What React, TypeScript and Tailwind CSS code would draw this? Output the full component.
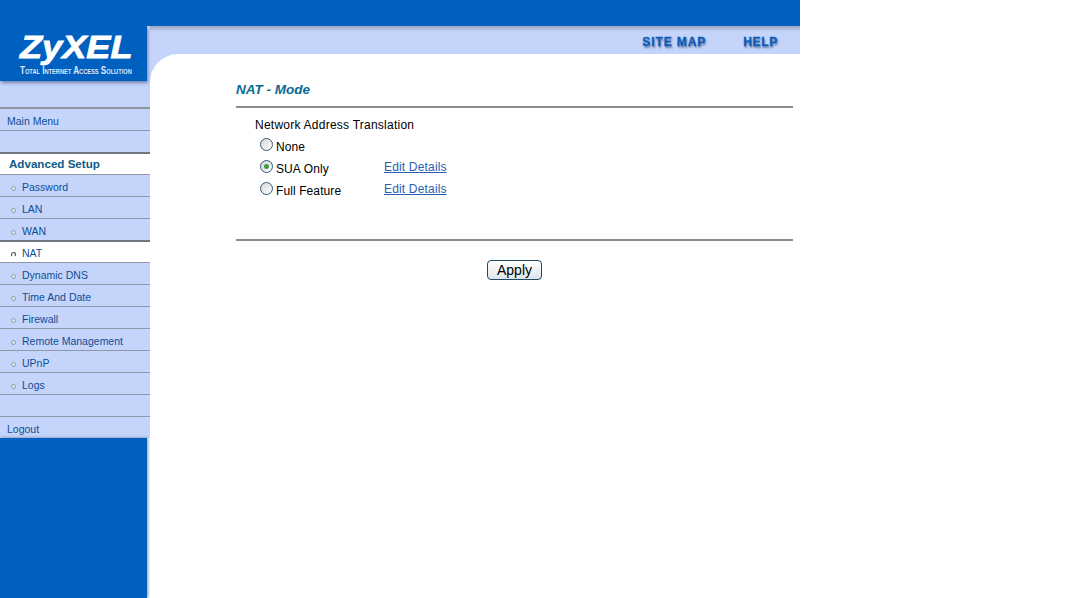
const menuFont = "font-['Liberation_Sans',Arial,sans-serif]";

const subItems = ['Password', 'LAN', 'WAN', 'NAT', 'Dynamic DNS', 'Time And Date', 'Firewall', 'Remote Management', 'UPnP', 'Logs'];

const Bullet = ({ active }: { active?: boolean }) => (
  <span
    className={
      active
        ? 'mt-[1px] mr-[6px] ml-[11px] h-[5px] w-[5px] rounded-full border border-[#555] border-b-transparent'
        : 'mr-[6px] ml-[11px] h-[5px] w-[5px] rounded-full border border-[#8a9aa8] bg-[#dfe5ee]'
    }
  />
);

const SubItem = ({ label }: { label: string }) => {
  const active = label === 'NAT';
  const beforeActive = label === 'WAN';
  return (
    <div
      className={`flex items-center text-[10.5px] text-[#0c4f96] ${
        active
          ? 'h-[21px] border-b border-[#8e99a8] bg-white pt-[3px]'
          : beforeActive
            ? 'h-[23px] border-b-2 border-[#6f7680] pt-[5px]'
            : 'h-[22px] border-b border-[#8e99a8] pt-[5px]'
      }`}
    >
      <Bullet active={active} />
      <span>{label}</span>
    </div>
  );
};

const Logo = () => (
  <div className="bg-[#c5d4fb]">
    <div className="relative z-10 flex h-[55px] w-[147px] flex-col items-start bg-[#0060c0] pl-[20px] shadow-[1px_2px_3px_rgba(60,70,110,0.55)]">
      <div className="mt-[5px] h-[32px] origin-left scale-x-[1.13] text-[32px] leading-[32px] font-bold text-white italic [-webkit-text-stroke:0.8px_white]">
        ZyXEL
      </div>
      <div className="mt-[3px] w-[114px] origin-left scale-x-[0.81] text-[10px] leading-[10px] font-bold whitespace-nowrap text-[#dfe8fa] [font-variant:small-caps]">
        Total Internet Access Solution
      </div>
    </div>
  </div>
);

const Sidebar = () => (
  <aside className={`flex w-[150px] flex-col ${menuFont}`}>
    <Logo />
    <div className="bg-[#c5d4fb]">
      <div className="h-[28px] border-b-2 border-[#8e95a0]" />
      <div className="flex h-[22px] items-center border-b border-[#8e99a8] pt-[5px] pl-[7px] text-[10.5px] text-[#0c4f96]">Main Menu</div>
      <div className="h-[23px] border-b-2 border-[#6f7680]" />
      <div className="flex h-[21px] items-center border-b border-[#8e99a8] bg-white pb-[1px] pl-[9px] text-[11.6px] font-bold text-[#0d5c86]">
        Advanced Setup
      </div>
      {subItems.map((label) => (
        <SubItem key={label} label={label} />
      ))}
      <div className="h-[22px] border-b border-[#8e99a8]" />
      <div className="flex h-[21px] items-center pt-[5px] pl-[7px] text-[10.5px] text-[#0c4f96]">Logout</div>
    </div>
    <div className="w-[147px] flex-1 bg-[#0060c0] shadow-[1px_0_3px_rgba(60,70,110,0.6)]" />
  </aside>
);

const RadioDot = ({ checked }: { checked?: boolean }) => (
  <span className="mt-[-2px] flex h-[13px] w-[13px] items-center justify-center rounded-full border border-[#2f5a78] bg-gradient-to-br from-[#d5d8d5] to-white">
    {checked && <span className="h-[5px] w-[5px] rounded-full bg-[#3f9a4a]" />}
  </span>
);

const RadioRow = ({ label, checked, link }: { label: string; checked?: boolean; link?: boolean }) => (
  <div className="flex h-[22px] items-center pl-[24px]">
    <RadioDot checked={checked} />
    <span className="mt-[4px] ml-[3px] w-[108px] tracking-[0.1px]">{label}</span>
    {link && <a className="mt-[-1px] tracking-[0.17px] text-[#2a5db0] underline">Edit Details</a>}
  </div>
);

const Content = () => (
  <main className={`flex-1 bg-[#c5d4fb] ${menuFont}`}>
    <div className="flex h-[28px] items-center justify-end bg-gradient-to-b from-[#9aa3c0] from-0% to-[#c5d4fb] to-20% pr-[22px] text-[12px] font-bold text-[#0a5cb8] [-webkit-text-stroke:0.3px_#0a5cb8] [text-shadow:1px_2px_2px_rgba(20,40,90,0.55)]">
      <span className="mt-[4px] mr-[37px] tracking-[0.9px]">SITE MAP</span>
      <span className="mt-[4px] tracking-[0.7px]">HELP</span>
    </div>
    <div className="h-[544px] rounded-tl-[28px] bg-white pr-[7px] pl-[86px] text-[12px] text-black">
      <h1 className="pt-[28px] text-[13.5px] leading-[16px] font-bold text-[#0a6a94] italic">NAT - Mode</h1>
      <div className="mt-[8px] h-[2px] bg-[#8c8c8c]" />
      <div className="mt-[9px] pl-[19px] text-[12px] leading-[16px] tracking-[0.24px]">Network Address Translation</div>
      <div className="mt-[1px]">
        <RadioRow label="None" />
        <RadioRow label="SUA Only" checked link />
        <RadioRow label="Full Feature" link />
      </div>
      <div className="mt-[39px] h-[2px] bg-[#8c8c8c]" />
      <div className="mt-[19px] flex justify-center">
        <button className="h-[20px] w-[55px] rounded-[4px] border border-[#1c4a68] bg-gradient-to-b from-white to-[#dfe5ea] text-[14px] leading-[16px] text-black">
          Apply
        </button>
      </div>
    </div>
  </main>
);

const App = () => (
  <div className="h-[598px] w-[800px] overflow-hidden bg-white">
    <div className="h-[26px] bg-[#0060c0]" />
    <div className="flex h-[572px]">
      <Sidebar />
      <Content />
    </div>
  </div>
);

export default App;
